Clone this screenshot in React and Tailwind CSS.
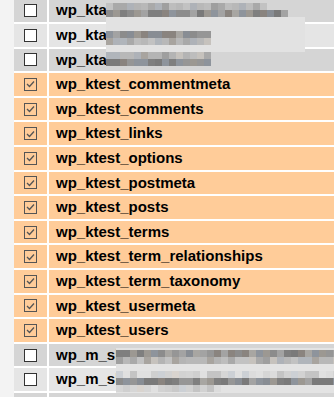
import React from 'react';

const rows = [
  { name: 'wp_kta', checked: false },
  { name: 'wp_kta', checked: false },
  { name: 'wp_kta', checked: false },
  { name: 'wp_ktest_commentmeta', checked: true },
  { name: 'wp_ktest_comments', checked: true },
  { name: 'wp_ktest_links', checked: true },
  { name: 'wp_ktest_options', checked: true },
  { name: 'wp_ktest_postmeta', checked: true },
  { name: 'wp_ktest_posts', checked: true },
  { name: 'wp_ktest_terms', checked: true },
  { name: 'wp_ktest_term_relationships', checked: true },
  { name: 'wp_ktest_term_taxonomy', checked: true },
  { name: 'wp_ktest_usermeta', checked: true },
  { name: 'wp_ktest_users', checked: true },
  { name: 'wp_m_sl', checked: false },
  { name: 'wp_m_sl', checked: false },
  { name: '', checked: false, noBox: true },
];

const dark = ['#8c8c8c', '#7f7f7f', '#8a847f', '#969696', '#a3a3a3', '#8e949c', '#7a7a7a', '#9c9892', '#888d94', '#a8a6a2'];
const mid = ['#a9a9a9', '#b4b4b4', '#bdbdbd', '#a8a49f', '#b0b5bb', '#c6c2bd', '#9f9f9f', '#b8b8b8', '#aeb2b8', '#c2c2c2'];
const light = ['#cfcfcf', '#d6d6d6', '#c9c9c9', '#d9d4cf', '#ccd0d5', '#dcdcdc', '#d2d2d2', '#c4c4c4', '#e0e0e0', '#d4d4d4'];

function pick(palette, seed) {
  const v = Math.abs(Math.sin(seed * 12.9898) * 43758.5453);
  return palette[Math.floor((v - Math.floor(v)) * palette.length)];
}

// blurred block: list of [palette, count, seed]
function Mosaic({ x, y, bands }) {
  return (
    <div className="absolute flex flex-col" style={{ left: x, top: y }}>
      {bands.map(([pal, n, s], i) => (
        <div key={i} className="flex h-[7px]">
          {Array.from({ length: n }).map((_, j) => (
            <div key={j} className="w-[7px] h-[7px]" style={{ background: pal ? pick(pal, s + j * 7.31) : 'transparent' }} />
          ))}
        </div>
      ))}
    </div>
  );
}

function Box({ checked }) {
  if (!checked) {
    return <div className="w-[13px] h-[13px] bg-white border border-[#333333]" />;
  }
  return (
    <div className="w-[13px] h-[13px] border border-[#555555] flex items-center justify-center">
      <svg width="9" height="8" viewBox="0 0 9 8" fill="none">
        <path d="M1 4 L3.5 6.5 L8 1.5" stroke="#555555" strokeWidth="1.3" />
      </svg>
    </div>
  );
}

export default function App() {
  return (
    <div className="relative w-[334px] h-[397px] overflow-hidden bg-[#f3f3f3] pl-[14px]" style={{ fontFamily: '"Liberation Sans", Arial, sans-serif' }}>
      <div className="flex flex-col gap-[2px] bg-white -mt-[0.6px]">
        {rows.map((r, i) => {
          const bg = r.checked ? 'bg-[#ffcc99]' : i % 2 === 0 ? 'bg-[#d5d5d5]' : 'bg-[#e5e5e5]';
          return (
            <div key={i} className="flex gap-[2px] h-[22.6px]">
              <div className={`w-[33px] flex items-center justify-center ${bg}`}>
                {!r.noBox && <Box checked={r.checked} />}
              </div>
              <div className={`flex-1 flex items-center pl-[7px] text-[15px] font-bold text-black ${bg}`}>
                {r.name}
              </div>
            </div>
          );
        })}
      </div>

      <div className="absolute left-[106px] top-[17px] w-[199px] h-[35px] bg-[#e2e2e2]" />
      <Mosaic x={106} y={3} bands={[[mid, 23, 1], [dark, 26, 2]]} />
      <Mosaic x={106} y={31} bands={[[dark, 15, 3], [mid, 15, 4]]} />
      <Mosaic x={106} y={52} bands={[[mid, 15, 5], [dark, 15, 6]]} />

      <div className="absolute left-[116px] top-[348px] w-[218px] h-[45px] bg-[#e3e3e3]" />
      <Mosaic x={116} y={350} bands={[[dark, 32, 7], [mid, 32, 8], [null, 1, 0], [light, 32, 9], [dark, 32, 10], [light, 15, 11]]} />
    </div>
  );
}
